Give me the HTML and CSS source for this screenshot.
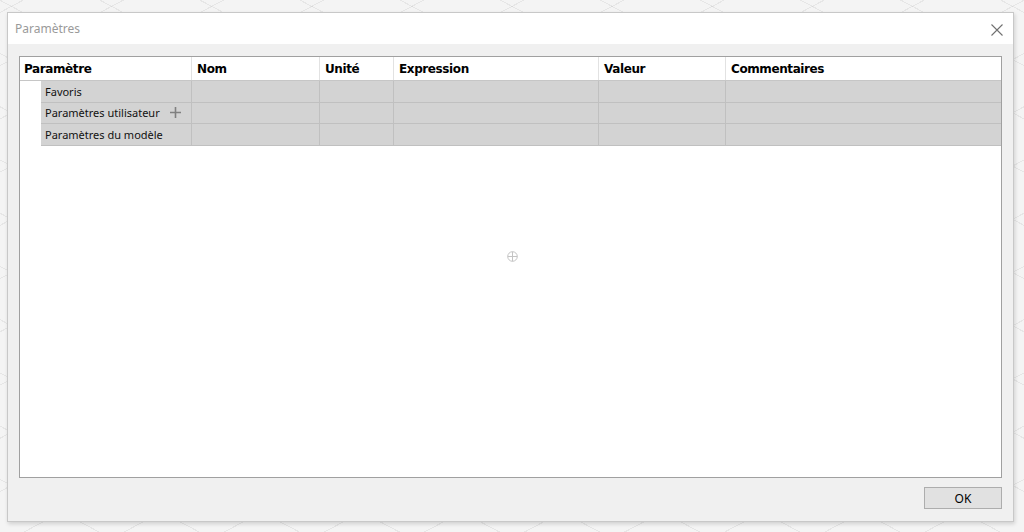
FILE: index.html
```html
<!DOCTYPE html>
<html lang="fr">
<head>
    <meta charset="UTF-8">
    <title>Paramètres</title>
    <link rel="stylesheet" href="styles.css">
</head>
<body>
    <div class="dialog">
        <div class="titlebar">
            <span class="title">Paramètres</span>
            <span class="close">
                <svg width="12" height="12" viewBox="0 0 12 12"><path d="M0.5 0.5 L11.5 11.5 M11.5 0.5 L0.5 11.5" stroke="#707070" stroke-width="1.1" fill="none"/></svg>
            </span>
        </div>

        <div class="content">
            <div class="table">
                <div class="row header">
                    <div class="cell first">Paramètre</div>
                    <div class="cell">Nom</div>
                    <div class="cell">Unité</div>
                    <div class="cell">Expression</div>
                    <div class="cell">Valeur</div>
                    <div class="cell last">Commentaires</div>
                </div>
                <div class="row group">
                    <div class="cell first">Favoris</div>
                    <div class="cell"></div>
                    <div class="cell"></div>
                    <div class="cell"></div>
                    <div class="cell"></div>
                    <div class="cell last"></div>
                </div>
                <div class="row group">
                    <div class="cell first">Paramètres utilisateur
                        <svg class="plus" width="11" height="11" viewBox="0 0 11 11"><path d="M5.5 0 V11 M0 5.5 H11" stroke="#808080" stroke-width="1.6" fill="none"/></svg>
                    </div>
                    <div class="cell"></div>
                    <div class="cell"></div>
                    <div class="cell"></div>
                    <div class="cell"></div>
                    <div class="cell last"></div>
                </div>
                <div class="row group">
                    <div class="cell first">Paramètres du modèle</div>
                    <div class="cell"></div>
                    <div class="cell"></div>
                    <div class="cell"></div>
                    <div class="cell"></div>
                    <div class="cell last"></div>
                </div>
                <div class="empty">
                    <svg width="11" height="11" viewBox="0 0 11 11"><circle cx="5.5" cy="5.5" r="4.8" stroke="#c4c4c4" stroke-width="1" fill="none"/><path d="M5.5 0.7 V10.3 M0.7 5.5 H10.3" stroke="#c4c4c4" stroke-width="1"/></svg>
                </div>
            </div>
        </div>

        <div class="footer">
            <button class="ok">OK</button>
        </div>
    </div>
</body>
</html>
```

FILE: styles.css
```css
body {
    margin: 0;
    width: 1024px;
    height: 532px;
    overflow: hidden;
    background-color: #f4f4f4;
    background-image:
        repeating-linear-gradient(28deg, transparent 0, transparent 46px, rgba(0, 0, 0, 0.06) 46px, rgba(0, 0, 0, 0.06) 47px),
        repeating-linear-gradient(-28deg, transparent 0, transparent 46px, rgba(0, 0, 0, 0.06) 46px, rgba(0, 0, 0, 0.06) 47px);
    font-family: "Noto Sans", "Open Sans", sans-serif;
    padding: 12px 0 0 7px;
    box-sizing: border-box;
}
.dialog {
    width: 1007px;
    height: 510px;
    background-color: #f0f0f0;
    border: 1px solid #c8c8c8;
    box-sizing: border-box;
    box-shadow: 1px 2px 4px rgba(0, 0, 0, 0.15);
    display: flex;
    flex-direction: column;
}
.titlebar {
    height: 31px;
    background-color: #ffffff;
    display: flex;
    align-items: center;
    justify-content: space-between;
    padding: 0 10px 0 7px;
    flex-shrink: 0;
}
.title {
    font-size: 12px;
    color: #9a9a9a;
}
.close {
    display: flex;
    padding-top: 2px;
}
.content {
    flex: 1;
    padding: 12px 11px 0 11px;
    display: flex;
}
.table {
    flex: 1;
    height: 422px;
    background-color: #ffffff;
    border: 1px solid #a0a0a0;
    box-sizing: border-box;
    display: flex;
    flex-direction: column;
}
.row {
    display: grid;
    grid-template-columns: 171px 128px 74px 205px 127px 1fr;
}
.cell {
    border-left: 1px solid #e2e2e2;
    padding: 0 5px;
    display: flex;
    align-items: center;
    white-space: nowrap;
    overflow: hidden;
}
.cell.first {
    border-left: none;
}
.header {
    height: 23px;
    border-bottom: 1px solid #c6c6c6;
    font-family: "DejaVu Sans", Verdana, sans-serif;
    font-weight: bold;
    font-size: 12px;
    color: #000000;
    letter-spacing: -0.4px;
}
.header .cell.first {
    padding-left: 4px;
}
.header .cell {
    padding-top: 1px;
}
.group {
    height: 20.6px;
    margin-left: 21px;
    grid-template-columns: 150px 128px 74px 205px 127px 1fr;
    background-color: #d3d3d3;
    border-bottom: 1px solid #c0c0c0;
    font-size: 11px;
    color: #111111;
}
.group .cell {
    border-left: 1px solid #c0c0c0;
}
.group .cell.first {
    border-left: none;
    padding-left: 4px;
}
.plus {
    margin-left: 10px;
}
.empty {
    flex: 1;
    display: flex;
    align-items: center;
    justify-content: center;
    padding: 0 0 110px 4px;
}
.footer {
    height: 44px;
    display: flex;
    justify-content: flex-end;
    align-items: flex-start;
    padding: 9px 11px 0 0;
    box-sizing: border-box;
}
.ok {
    width: 78px;
    height: 22px;
    background-color: #e1e1e1;
    border: 1px solid #adadad;
    font-family: "Noto Sans", sans-serif;
    font-size: 12px;
    color: #000000;
    padding: 0;
}
```
